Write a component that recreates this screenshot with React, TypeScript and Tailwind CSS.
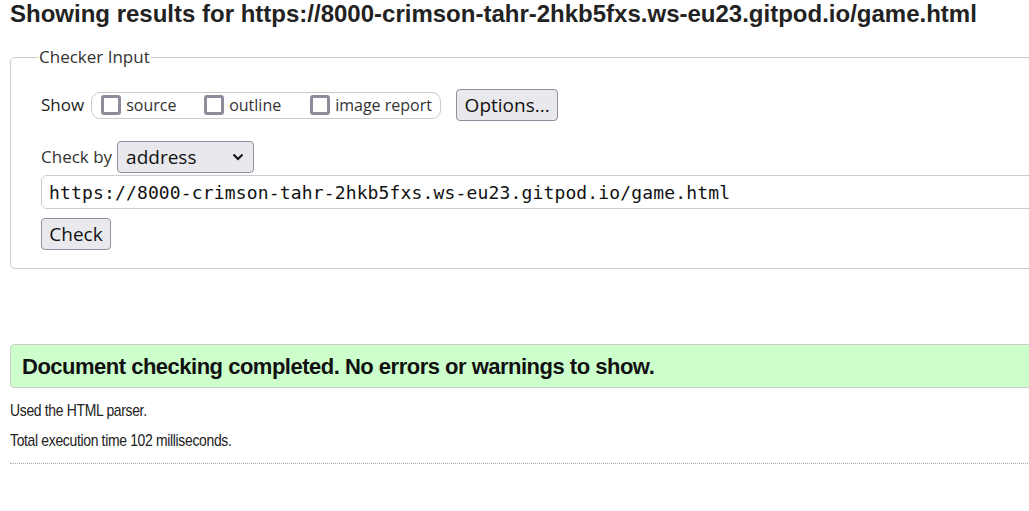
const url = "https://8000-crimson-tahr-2hkb5fxs.ws-eu23.gitpod.io/game.html";

const Box = () => (
  <span className="inline-block w-[20px] h-[20px] border-[3px] border-[#8f8b9b] rounded-[3px] bg-white mr-[5px]" />
);

const App = () => {
  const shows = [
    { label: "source", w: "w-[103px]" },
    { label: "outline", w: "w-[106px]" },
    { label: "image report", w: "" },
  ];

  return (
    <div className="w-[1029px] h-[511px] overflow-hidden bg-white text-[#222]">
      <div className="w-[1100px] pl-[10px]">
        <h2 className="font-['Liberation_Sans',Arial,sans-serif] font-bold text-[24px] leading-[28px] text-[#222]">
          Showing results for {url}
        </h2>

        <fieldset className="mt-[19px] border border-[#ccc] rounded-[5px] pl-[30px] pr-[10px] pb-[18px] font-['Open_Sans','Noto_Sans',sans-serif]">
          <legend className="ml-[-3px] px-[1px] text-[17px] text-[#333] leading-[20px]">Checker Input</legend>

          <div className="flex items-center mt-[22px]">
            <span className="text-[17px] text-[#222] mr-[7px]">Show</span>
            <div className="flex items-center h-[27px] border border-[#ccc] rounded-[9px] pl-[9px] pr-[8px] w-[350px]">
              {shows.map((s) => (
                <label key={s.label} className={`flex items-center text-[16px] text-[#333] ${s.w}`}>
                  <Box />
                  {s.label}
                </label>
              ))}
            </div>
            <button className="ml-[15px] h-[32px] w-[102px] bg-[#e9e9ed] border border-[#8f8f9d] rounded-[4px] text-[19px] text-[#111] leading-none">
              Options...
            </button>
          </div>

          <div className="flex items-center mt-[20px]">
            <span className="text-[17px] text-[#333] mr-[5px]">Check by</span>
            <div className="flex items-center justify-between w-[137px] h-[32px] bg-[#e9e9ed] border border-[#8f8f9d] rounded-[4px] pl-[8px] pr-[9px]">
              <span className="text-[19px] text-[#111] leading-none">address</span>
              <svg width="12" height="8" viewBox="0 0 12 8" fill="none" stroke="#111" strokeWidth="2">
                <path d="M1.5 1.5 L6 6 L10.5 1.5" />
              </svg>
            </div>
          </div>

          <div className="mt-[2px] h-[34px] border border-[#ccc] rounded-[6px] flex items-center pl-[7px] font-['DejaVu_Sans_Mono',monospace] text-[18px] text-[#111] tracking-[0.15px]">
            {url}
          </div>

          <button className="mt-[9px] h-[32px] w-[70px] bg-[#e9e9ed] border border-[#8f8f9d] rounded-[4px] text-[19px] text-[#111] leading-none">
            Check
          </button>
        </fieldset>

        <div className="font-['Liberation_Sans',Arial,sans-serif]">
          <div className="mt-[75px] h-[44px] bg-[#ccffcc] border border-[#ccc] rounded-[4px] flex items-center pl-[11px]">
            <p className="font-bold text-[22px] text-[#111] tracking-[-0.5px]">
              Document checking completed. No errors or warnings to show.
            </p>
          </div>
          <p className="mt-[13px] text-[17px] leading-[20px] text-[#222] tracking-[-0.4px] scale-x-[0.82] origin-left whitespace-nowrap">
            Used the HTML parser.
          </p>
          <p className="mt-[10px] text-[17px] leading-[20px] text-[#222] tracking-[-0.4px] scale-x-[0.82] origin-left whitespace-nowrap">
            Total execution time 102 milliseconds.
          </p>
          <div className="mt-[12px] border-t border-dotted border-[#aaa]" />
        </div>
      </div>
    </div>
  );
};

export default App;
